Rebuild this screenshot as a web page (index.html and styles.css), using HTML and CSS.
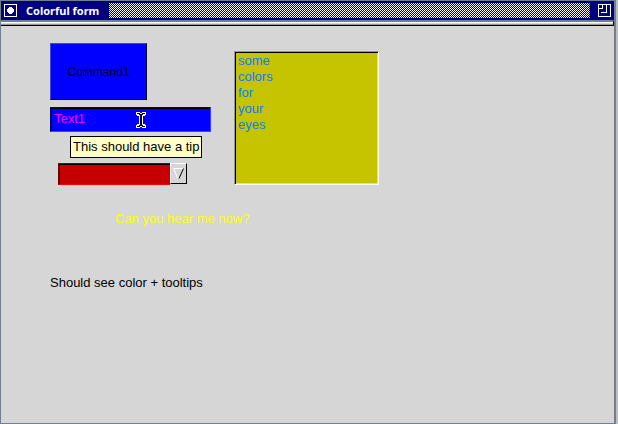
FILE: index.html
```html
<!DOCTYPE html>
<html lang="en">
<head>
<meta charset="utf-8">
<title>Colorful form</title>
<link rel="stylesheet" href="styles.css">
</head>
<body>
<main class="window">
  <header class="titlebar">
    <button class="title-button" type="button" aria-label="Window menu">
      <svg width="13" height="13" viewBox="0 0 13 13" shape-rendering="crispEdges"><path d="M.5 .5h12v12H.5z" fill="none" stroke="#fff"/><path d="M5 3h3v1h1v1h1v3H9v1H8v1H5V9H4V8H3V5h1V4h1z" fill="#fff"/></svg>
    </button>
    <h1 class="title">Colorful form</h1>
    <svg class="grip" aria-hidden="true">
      <defs><pattern id="dots" width="2" height="2" patternUnits="userSpaceOnUse"><path d="M0 0h1v1H0zM1 1h1v1H1z" fill="#fff" shape-rendering="crispEdges"/></pattern></defs>
      <rect width="100%" height="100%" fill="url(#dots)"/>
    </svg>
    <button class="title-button" type="button" aria-label="Maximize">
      <svg width="13" height="13" viewBox="0 0 13 13" shape-rendering="crispEdges" fill="none" stroke="#fff"><path d="M.5 .5h12v12H.5zM4.500 0v4.500H0M8.500 0v8.500H3"/></svg>
    </button>
  </header>
  <div class="menu-edge"></div>
  <form class="form">
    <div class="fields">
      <button class="command" type="button">Command1</button>
      <div class="text-wrap">
        <input class="text" type="text" value="Text1" aria-label="Text1" aria-describedby="tip">
        <svg class="ibeam" width="10" height="16" viewBox="0 0 10 16" shape-rendering="crispEdges" aria-hidden="true"><path d="M0 0h4v1h2V0h4v3H9v1H7v8h2v1h1v3H6v-1H4v1H0v-3h1v-1h2V4H1V3H0z" fill="#fff"/><path d="M1 1h3v1H1zM6 1h3v1H6zM3 2h4v1H3zM4 3h2v10H4zM3 13h4v1H3zM1 14h3v1H1zM6 14h3v1H6z" fill="#000"/></svg>
        <div class="tip" id="tip" role="tooltip">This should have a tip</div>
      </div>
      <div class="combo">
        <select class="combo-select" aria-label="Combo"><option></option></select>
        <span class="combo-arrow" aria-hidden="true"><svg width="11" height="11" viewBox="0 0 11 11"><path d="M10.500 .5H.5l4.500 10" fill="none" stroke="#fff"/><path d="M10.500 .5L6 10.500" fill="none" stroke="#000"/></svg></span>
      </div>
      <p class="hear">Can you hear me now?</p>
      <p class="note">Should see color + tooltips</p>
    </div>
    <select class="list" size="8" aria-label="Colors">
      <option>some</option>
      <option>colors</option>
      <option>for</option>
      <option>your</option>
      <option>eyes</option>
    </select>
  </form>
</main>
</body>
</html>
```
FILE: styles.css
```css
* { box-sizing: border-box; }

body {
  margin: 0;
  padding-right: 2px;
  background: #bebebe;
  font: 13px/16px "Liberation Sans", Arial, sans-serif;
  color: #000;
}

button, input, select { font: inherit; border-radius: 0; }

.window {
  display: flex;
  flex-direction: column;
  min-height: 100vh;
  border: solid #708090;
  border-width: 1px 2px 1px 1px;
  background: #d6d6d6;
}

.titlebar {
  display: flex;
  align-items: center;
  height: 19px;
  padding: 0 3px;
  background: #000080;
}

.title-button {
  display: flex;
  padding: 0;
  border: 0;
  background: none;
}

.title {
  margin: 0 10px 0 9px;
  font: bold 11px/18px "Noto Sans", sans-serif;
  color: #fff;
  white-space: nowrap;
}

.grip {
  flex: 1;
  width: 0;
  height: 15px;
  margin-right: 8px;
}

.menu-edge {
  height: 6px;
  border-top: 2px solid #708090;
  border-right: 1px solid #000;
  border-bottom: 1px solid #000;
  background: linear-gradient(#fff 0 1px, #d6d6d6 1px 2px, #969696 2px);
}

.form {
  display: flex;
  align-items: flex-start;
  gap: 23px;
  padding: 17px 16px 0 49px;
}

.fields { width: 161px; }

.command {
  display: block;
  width: 97px;
  height: 57px;
  margin-bottom: 7px;
  padding: 0;
  border: 1px solid;
  border-color: #4040ff #000 #000 #4040ff;
  background: #00f;
  color: #000;
  font-size: 12px;
}

.text-wrap {
  position: relative;
  margin-bottom: 31px;
}

.text {
  display: block;
  width: 100%;
  height: 25px;
  padding: 0 3px 2px;
  border: 1px solid;
  border-color: #000080 #4040ff #4040ff #000080;
  box-shadow: inset 1px 1px #000;
  background: #00f;
  color: #f0f;
  outline: 0;
}

.ibeam {
  position: absolute;
  left: 86px;
  top: 5px;
}

.tip {
  position: absolute;
  left: 20px;
  top: 29px;
  height: 22px;
  padding: 2px;
  border: 1px solid #000;
  background: #ffffc8;
  white-space: nowrap;
}

.combo {
  position: relative;
  width: 129px;
  margin: 0 0 26px 8px;
}

.combo-select {
  display: block;
  appearance: none;
  width: 112px;
  height: 22px;
  border: solid;
  border-width: 1px 0 1px 1px;
  border-color: #800000 #f00 #f00 #800000;
  box-shadow: inset 1px 1px #000;
  background: #c60000;
}

.combo-arrow {
  position: absolute;
  top: 0;
  right: 0;
  display: grid;
  place-items: center;
  width: 17px;
  height: 21px;
  border: 1px solid;
  border-color: #fff #000 #000 #fff;
  background: #d6d6d6;
}

.hear, .note {
  margin: 0;
  white-space: nowrap;
}

.hear {
  margin: 0 0 48px 65px;
  color: #ff0;
}

.list {
  appearance: none;
  width: 145px;
  height: 134px;
  margin-top: 8px;
  padding: 1px 0 0 2px;
  border: 1px solid;
  border-color: #969696 #fff #fff #969696;
  box-shadow: inset 1px 1px #000, inset -1px -1px #d6d6d6;
  background: #c6c300;
  color: #0082ff;
  overflow: hidden;
}

.list option {
  min-height: 16px;
  padding: 0 1px;
  line-height: 16px;
}
```
